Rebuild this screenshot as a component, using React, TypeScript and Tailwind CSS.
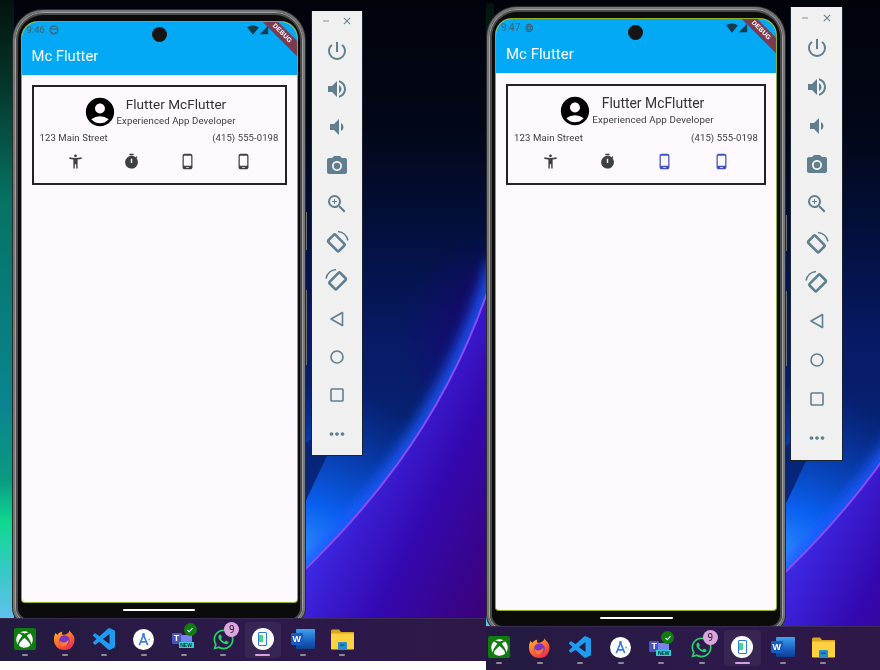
import React from "react";
import {
  MdAccessibilityNew, MdTimer, MdPhoneAndroid, MdAccountCircle, MdPowerSettingsNew,
  MdVolumeUp, MdVolumeDown, MdPhotoCamera, MdZoomIn, MdMoreHoriz, MdSignalWifi4Bar,
  MdSignalCellular4Bar, MdLanguage, MdClose, MdRemove,
} from "react-icons/md";
import { FaXbox, FaWhatsapp } from "react-icons/fa";

type Cfg = {
  id: string; scene: string; viewBox: string; svgW: number; svgH: number;
  phone: string; screen: string; appbar: string; statusRow: string; title: string;
  card: string; name: string; sub: string; line: string; cell: string; headerRow: string; addr: string;
  homeBar: string; camera: string; toolbar: string; tbHeader: string; tbItem: string;
  taskbar: string; taskCell: string; taskRow: string; time: string;
  buttonA: string; buttonB: string;
};

function Wallpaper({ c }: { c: Cfg }) {
  const arc = "M250 620 C360 525 450 420 497 262";
  const g = c.id;
  return (
    <svg className="absolute inset-0" width={c.svgW} height={c.svgH} viewBox={c.viewBox}>
      <defs>
        <linearGradient id={`base${g}`} x1="0" y1="0" x2="0" y2="1">
          <stop offset="0" stopColor="#01030a" />
          <stop offset="0.2" stopColor="#020718" />
          <stop offset="0.35" stopColor="#03103f" />
          <stop offset="0.5" stopColor="#071a66" />
          <stop offset="0.75" stopColor="#062a80" />
        </linearGradient>
        <linearGradient id={`low${g}`} gradientUnits="userSpaceOnUse" x1="300" y1="540" x2="500" y2="640">
          <stop offset="0" stopColor="#4030f0" />
          <stop offset="0.45" stopColor="#3408b0" />
          <stop offset="1" stopColor="#3c006a" />
        </linearGradient>
        <radialGradient id={`up${g}`} gradientUnits="userSpaceOnUse" cx="510" cy="340" r="110">
          <stop offset="0" stopColor="#1e0078" />
          <stop offset="1" stopColor="#1e0078" stopOpacity="0" />
        </radialGradient>
        <radialGradient id={`glow${g}`} gradientUnits="userSpaceOnUse" cx="300" cy="570" r="190">
          <stop offset="0" stopColor="#3a9cff" />
          <stop offset="0.35" stopColor="#0a60f0" />
          <stop offset="1" stopColor="#0a40c0" stopOpacity="0" />
        </radialGradient>
        <linearGradient id={`edge${g}`} x1="0" y1="0" x2="0" y2="1">
          <stop offset="0" stopColor="#02130d" />
          <stop offset="0.14" stopColor="#05382c" />
          <stop offset="0.32" stopColor="#067364" />
          <stop offset="0.65" stopColor="#0a8590" />
          <stop offset="0.76" stopColor="#0a9a80" />
          <stop offset="0.83" stopColor="#10d890" />
          <stop offset="0.91" stopColor="#38c8c8" />
          <stop offset="1" stopColor="#6cc0f4" />
        </linearGradient>
        <filter id={`blur${g}`}><feGaussianBlur stdDeviation="7" /></filter>
      </defs>
      <rect x="0" y="-10" width="520" height="700" fill={`url(#base${g})`} />
      <rect x="380" y="200" width="140" height="300" fill={`url(#up${g})`} />
      <path d={`${arc} L120 620 L120 360 L400 300 Z`} fill={`url(#glow${g})`} />
      <path d={arc} fill="none" stroke="#1f58ff" strokeWidth="16" filter={`url(#blur${g})`} />
      <path d={`${arc} L520 262 L520 700 L250 700 Z`} fill={`url(#low${g})`} />
      <path d={arc} fill="none" stroke="#8a4cf4" strokeWidth="2" />
      <rect x="0" y="0" width="14" height="630" fill={`url(#edge${g})`} />
    </svg>
  );
}

function Rotate({ flip }: { flip?: boolean }) {
  return (
    <svg width="24" height="24" viewBox="0 0 24 24" fill="none" stroke="#5f7f8f" className={flip ? "-scale-x-100" : ""}>
      <rect x="6.4" y="5.4" width="10" height="15" rx="1.2" strokeWidth="2.6" transform="rotate(-45 11.4 12.9)" />
      <path d="M13 1.4 A11 11 0 0 1 23 10.5" strokeWidth="1.5" />
    </svg>
  );
}

function Toolbar({ c }: { c: Cfg }) {
  const ic = "text-[#5f7f8f]";
  const items: React.ReactNode[] = [
    <MdPowerSettingsNew size={24} className={ic} />,
    <MdVolumeUp size={24} className={ic} />,
    <MdVolumeDown size={24} className={ic} />,
    <MdPhotoCamera size={24} className={ic} />,
    <MdZoomIn size={24} className={ic} />,
    <Rotate />,
    <Rotate flip />,
    <svg width="22" height="22" viewBox="0 0 22 22" fill="none" stroke="#5f7f8f" strokeWidth="1.6" strokeLinejoin="round"><path d="M16.5 4.5 L5 11 L16.5 17.5 Z" /></svg>,
    <svg width="22" height="22" viewBox="0 0 22 22" fill="none" stroke="#5f7f8f" strokeWidth="1.6"><circle cx="11" cy="11" r="6" /></svg>,
    <svg width="22" height="22" viewBox="0 0 22 22" fill="none" stroke="#5f7f8f" strokeWidth="1.6"><rect x="5" y="5" width="12" height="12" rx="0.8" /></svg>,
    <MdMoreHoriz size={22} className={ic} />,
  ];
  return (
    <div className={`absolute flex flex-col bg-[#f0f0f0] border-r border-b border-[#1a2430] shadow-[-1px_0_0_#1a2430] ${c.toolbar}`}>
      <div className={`flex items-center justify-between px-[9px] shrink-0 ${c.tbHeader}`}>
        <MdRemove size={10} className="text-[#6a7f8a]" />
        <MdClose size={12} className="text-[#5f7f8f]" />
      </div>
      {items.map((it, i) => (
        <div key={i} className={`flex items-center justify-center shrink-0 ${c.tbItem}`}>{it}</div>
      ))}
    </div>
  );
}

function Phone({ c, blue, time, world }: { c: Cfg; blue?: boolean; time: string; world?: boolean }) {
  const dark = "text-[#3f3f46]";
  const ph = blue ? "text-[#3f51c0]" : dark;
  return (
    <>
      <div className={`absolute bg-[#6d6d6d] ${c.buttonA}`} />
      <div className={`absolute bg-[#6d6d6d] ${c.buttonB}`} />
      <div className={`absolute flex flex-col items-center bg-[#0b0b0b] border-2 border-[#767676] rounded-t-[30px] rounded-b-[16px] shadow-[0_0_0_1px_#2a2a2a,inset_0_0_0_1px_#a0a0a0,inset_0_0_0_3px_#4a4a4a] ${c.phone}`}>
        <div className={`relative flex flex-col shrink-0 overflow-hidden bg-[#fdf9fe] rounded-t-[16px] rounded-b-[3px] shadow-[0_0_0_1px_#8fae22] ${c.screen}`}>
          <div className={`relative flex flex-col shrink-0 bg-[#03a9f4] ${c.appbar}`}>
            <div className={`flex items-center justify-between text-[#3d6070] ${c.statusRow}`}>
              <div className={`flex items-center gap-[4px] ${c.time}`}>
                <span>{time}</span>
                {world ? <MdLanguage size={10} /> : (
                  <svg width="10" height="10" viewBox="0 0 10 10" fill="none" stroke="currentColor" strokeWidth="1.2"><circle cx="5" cy="5" r="4" /><path d="M1.5 4 H8.5 M3.5 7 V8.5 M6.5 7 V8.5" /></svg>
                )}
              </div>
              <div className="flex items-center">
                <MdSignalWifi4Bar size={12} className="text-[#143a50]" />
                <MdSignalCellular4Bar size={10} className="text-[#143a50]" />
              </div>
            </div>
            <div className={`text-white ${c.title}`}>Mc Flutter</div>
            <div className={`absolute left-1/2 rounded-full bg-[#151515] ${c.camera}`} />
            <div className="absolute top-0 right-0 w-[40px] h-[40px] overflow-hidden">
              <div className="absolute top-[6px] -right-[15px] w-[60px] h-[11px] rotate-45 bg-[#7a3a50] text-white text-[6.5px] font-bold flex items-center justify-center leading-none tracking-[0.2px] font-['Liberation_Sans',sans-serif]">DEBUG</div>
            </div>
          </div>
          <div className={`flex flex-col shrink-0 border-2 border-[#222] text-[#3c3c3c] ${c.card}`}>
            <div className={`flex items-start justify-center ${c.headerRow}`}>
              <MdAccountCircle size={34} className="text-black shrink-0" />
              <div className="flex flex-col items-center">
                <div className={`text-[#333] ${c.name}`}>Flutter McFlutter</div>
                <div className={c.sub}>Experienced App Developer</div>
              </div>
            </div>
            <div className={`flex justify-between ${c.line} ${c.addr}`}>
              <span>123 Main Street</span>
              <span>(415) 555-0198</span>
            </div>
            <div className="flex justify-center mt-[8px]">
              <div className={`flex justify-center ${c.cell}`}><MdAccessibilityNew size={17} className={dark} /></div>
              <div className={`flex justify-center ${c.cell}`}><MdTimer size={17} className={dark} /></div>
              <div className={`flex justify-center ${c.cell}`}><MdPhoneAndroid size={17} className={ph} /></div>
              <div className={`flex justify-center ${c.cell}`}><MdPhoneAndroid size={17} className={ph} /></div>
            </div>
          </div>
        </div>
        <div className={`bg-white rounded-full h-[2px] shrink-0 ${c.homeBar}`} />
      </div>
    </>
  );
}

function Xbox() {
  return <div className="w-[22px] h-[22px] rounded-[2px] bg-[#107c10] flex items-center justify-center"><FaXbox size={17} className="text-white" /></div>;
}
function Firefox() {
  return (
    <svg width="23" height="23" viewBox="0 0 24 24">
      <defs>
        <linearGradient id="ff" x1="0" y1="0" x2="0.6" y2="1"><stop offset="0" stopColor="#ffc42e" /><stop offset="0.5" stopColor="#ff7a2a" /><stop offset="1" stopColor="#f0304e" /></linearGradient>
      </defs>
      <path d="M17 1 C17 4 20 5 22 9 C24 15 20 23 12 23 C5 23 1 18 1 12 C1 9 2 6 3 5 C3 6 4 7 5 7 C6 5 8 4 10 4 C9 5 9 6 10 7 C14 7 18 5 17 1 Z" fill="url(#ff)" />
      <circle cx="12" cy="13" r="5.5" fill="#7a35c8" />
      <path d="M7 13 C9 16 14 16 16 12 C17 16 13 20 10 19 C8 18 7 16 7 13 Z" fill="#ff7a2a" />
    </svg>
  );
}
function VSCode() {
  return (
    <svg width="22" height="22" viewBox="0 0 24 24">
      <path fill="#1f9cf0" d="M23.15 2.587L18.21.21a1.494 1.494 0 0 0-1.705.29l-9.46 8.63-4.12-3.128a.999.999 0 0 0-1.276.057L.327 7.261A1 1 0 0 0 .326 8.74L3.899 12 .326 15.26a1 1 0 0 0 .001 1.479L1.65 17.94a.999.999 0 0 0 1.276.057l4.12-3.128 9.46 8.63a1.492 1.492 0 0 0 1.704.29l4.942-2.377A1.5 1.5 0 0 0 24 20.06V3.939a1.5 1.5 0 0 0-.85-1.352zm-5.146 14.861L10.826 12l7.178-5.448v10.896z" />
    </svg>
  );
}
function Studio() {
  return (
    <div className="w-[21px] h-[21px] rounded-full bg-white flex items-center justify-center">
      <svg width="15" height="15" viewBox="0 0 16 16" fill="none" stroke="#3b78e7" strokeWidth="1.7">
        <path d="M8 3 L3.5 14 M8 3 L12.5 14 M5 10.5 H11" />
        <circle cx="8" cy="2.5" r="1.4" fill="#3b78e7" stroke="none" />
        <circle cx="14" cy="8" r="1" fill="#3ddc84" stroke="none" />
      </svg>
    </div>
  );
}
function Teams() {
  return (
    <div className="relative w-[24px] h-[24px]">
      <div className="absolute left-0 top-[6px] w-[10px] h-[11px] bg-[#4b53bc] rounded-[1px] text-white text-[9px] font-bold font-['Liberation_Sans'] flex items-center justify-center leading-none">T</div>
      <div className="absolute left-[9px] top-[8px] w-[11px] h-[9px] bg-[#7b83eb] rounded-b-[3px]" />
      <div className="absolute left-[7px] top-[15px] w-[15px] h-[6px] bg-[#2bd4d4] text-[#123] text-[5px] font-bold font-['Liberation_Sans'] flex items-center justify-center leading-none">NEW</div>
      <div className="absolute left-[12px] -top-[4px] w-[13px] h-[13px] rounded-full bg-[#107c10] flex items-center justify-center">
        <svg width="8" height="8" viewBox="0 0 8 8" fill="none" stroke="#dff" strokeWidth="1.1"><path d="M1.5 4 L3.3 5.8 L6.5 2.2" /></svg>
      </div>
    </div>
  );
}
function Whatsapp() {
  return (
    <div className="relative w-[24px] h-[24px] flex items-center justify-center">
      <FaWhatsapp size={23} className="text-[#25d366]" />
      <div className="absolute left-[13px] -top-[5px] w-[15px] h-[15px] rounded-full bg-[#dba6e0] text-[#222] text-[10px] font-['Roboto'] flex items-center justify-center leading-none">9</div>
    </div>
  );
}
function Emulator() {
  return (
    <div className="w-[22px] h-[22px] rounded-full bg-white flex items-center justify-center">
      <div className="relative w-[9px] h-[14px] border-[1.5px] border-[#2f7de0] rounded-[1px]">
        <div className="absolute left-0 top-[2px] w-[4px] h-[7px] bg-[#3ddc84]" />
      </div>
    </div>
  );
}
function Word() {
  return (
    <div className="relative w-[24px] h-[20px]">
      <div className="absolute left-[5px] top-0 w-[19px] h-[20px] rounded-[1px] bg-[linear-gradient(#41a5ee_0%,#2b7cd3_33%,#185abd_66%,#103f91_100%)]" />
      <div className="absolute left-0 top-[4px] w-[12px] h-[12px] rounded-[1px] bg-[#185abd] text-white text-[9px] font-bold font-['Liberation_Sans'] flex items-center justify-center leading-none">W</div>
    </div>
  );
}
function Folder() {
  return (
    <svg width="23" height="21" viewBox="0 0 23 21">
      <path d="M0 2 a1.5 1.5 0 0 1 1.5 -1.5 H8 L10 3 H23 V20 H0 Z" fill="#d9a521" />
      <rect x="0" y="4.5" width="23" height="16" rx="1" fill="#fdd13f" />
      <path d="M7 20.5 V14 a1 1 0 0 1 1 -1 H15 a1 1 0 0 1 1 1 V20.5 Z" fill="#2a8bc8" />
      <rect x="9" y="15.5" width="5" height="1.4" fill="#0f5a90" />
    </svg>
  );
}

function Taskbar({ c }: { c: Cfg }) {
  const apps: React.ReactNode[] = [<Xbox />, <Firefox />, <VSCode />, <Studio />, <Teams />, <Whatsapp />, <Emulator />, <Word />, <Folder />];
  return (
    <div className={`absolute left-0 right-0 bg-[linear-gradient(90deg,#241a40,#2c1a4a_50%,#2e1848)] border-t border-[#3a2c52] overflow-hidden ${c.taskbar}`}>
      <div className={`flex h-full ${c.taskRow}`}>
        {apps.map((a, i) => (
          <div key={i} className={`relative shrink-0 flex flex-col items-center ${c.taskCell}`}>
            {i === 6 && <div className="absolute top-[3px] left-[2px] right-[2px] h-[36px] rounded-[4px] bg-white/5" />}
            <div className="relative h-[28px] mt-[6px] flex items-center justify-center">{a}</div>
            <div className={`relative mt-[1px] h-[2px] rounded-full ${i === 6 ? "w-[15px] bg-[#d9a0e0]" : "w-[6px] bg-[#8d8a98]"}`} />
          </div>
        ))}
      </div>
    </div>
  );
}

const LEFT: Cfg = {
  id: "a", scene: "left-0 top-0 w-[486px] h-[661px]", viewBox: "0 0 486 661", svgW: 486, svgH: 661,
  phone: "left-[13px] top-[10px] w-[292px] h-[614px] pt-[10px]", screen: "w-[275px] h-[580px]",
  appbar: "h-[53px]", statusRow: "h-[16px] pl-[5px] pr-[28px]", title: "pl-[10px] text-[14.8px] leading-[36px] font-['Roboto',sans-serif]",
  card: "mx-[10px] mt-[10px] w-[255px] h-[100px] font-['Roboto',sans-serif]",
  name: "text-[13.6px] leading-[18px]", sub: "text-[9.6px] leading-[15px] tracking-[0.1px]",
  line: "text-[9.5px] leading-[14px] tracking-[0.1px]", addr: "px-[6px] mt-[1.5px]", cell: "w-[56px]", headerRow: "pt-[8px]",
  homeBar: "mt-[7px] w-[72px]", camera: "-ml-[7.5px] top-[5px] w-[15px] h-[15px]",
  toolbar: "left-[312px] top-[11px] w-[51px] h-[445px]", tbHeader: "h-[20.5px]", tbItem: "h-[38.3px]",
  taskbar: "top-[618px] h-[43px]", taskCell: "w-[39.7px]", taskRow: "pl-[5px]", time: "text-[9.5px] font-['Roboto',sans-serif]",
  buttonA: "left-[304px] top-[212px] w-[3px] h-[38px]", buttonB: "left-[304px] top-[290px] w-[3px] h-[75px]",
};
const RIGHT: Cfg = {
  id: "b", scene: "left-[486px] top-0 w-[394px] h-[670px]", viewBox: "6 -3 394 670", svgW: 394, svgH: 670,
  phone: "left-[1px] top-[7px] w-[298px] h-[624px] pt-[10px]", screen: "w-[280px] h-[591px]",
  appbar: "h-[54px]", statusRow: "h-[17px] pl-[5px] pr-[28px]", title: "pl-[10px] text-[15px] leading-[36px] font-['Roboto',sans-serif]",
  card: "mx-[10px] mt-[11px] w-[260px] h-[101px] font-['Roboto',sans-serif]",
  name: "text-[13.9px] leading-[18px]", sub: "text-[9.8px] leading-[15px] tracking-[0.1px]",
  line: "text-[9.6px] leading-[14px] tracking-[0.1px]", addr: "px-[6px] mt-[3px]", cell: "w-[57.3px]", headerRow: "pt-[8px]",
  homeBar: "mt-[7px] w-[73px]", camera: "-ml-[8.5px] top-[6px] w-[15px] h-[15px]",
  toolbar: "left-[305px] top-[7px] w-[52px] h-[454px]", tbHeader: "h-[21.5px]", tbItem: "h-[39px]",
  taskbar: "top-[626px] h-[44px]", taskCell: "w-[40.5px]", taskRow: "-ml-[7px]", time: "text-[10px] font-['Roboto',sans-serif]",
  buttonA: "left-[298px] top-[215px] w-[3px] h-[36px]", buttonB: "left-[298px] top-[291px] w-[3px] h-[75px]",
};

function Scene({ c, blue, time, world }: { c: Cfg; blue?: boolean; time: string; world?: boolean }) {
  return (
    <div className={`absolute overflow-hidden ${c.scene}`}>
      <Wallpaper c={c} />
      <Phone c={c} blue={blue} time={time} world={world} />
      <Toolbar c={c} />
      <Taskbar c={c} />
    </div>
  );
}

export default function App() {
  return (
    <div className="relative w-[880px] h-[670px] overflow-hidden bg-white blur-[0.35px]">
      <Scene c={LEFT} time="9:46" />
      <Scene c={RIGHT} time="9:47" blue world />
    </div>
  );
}
